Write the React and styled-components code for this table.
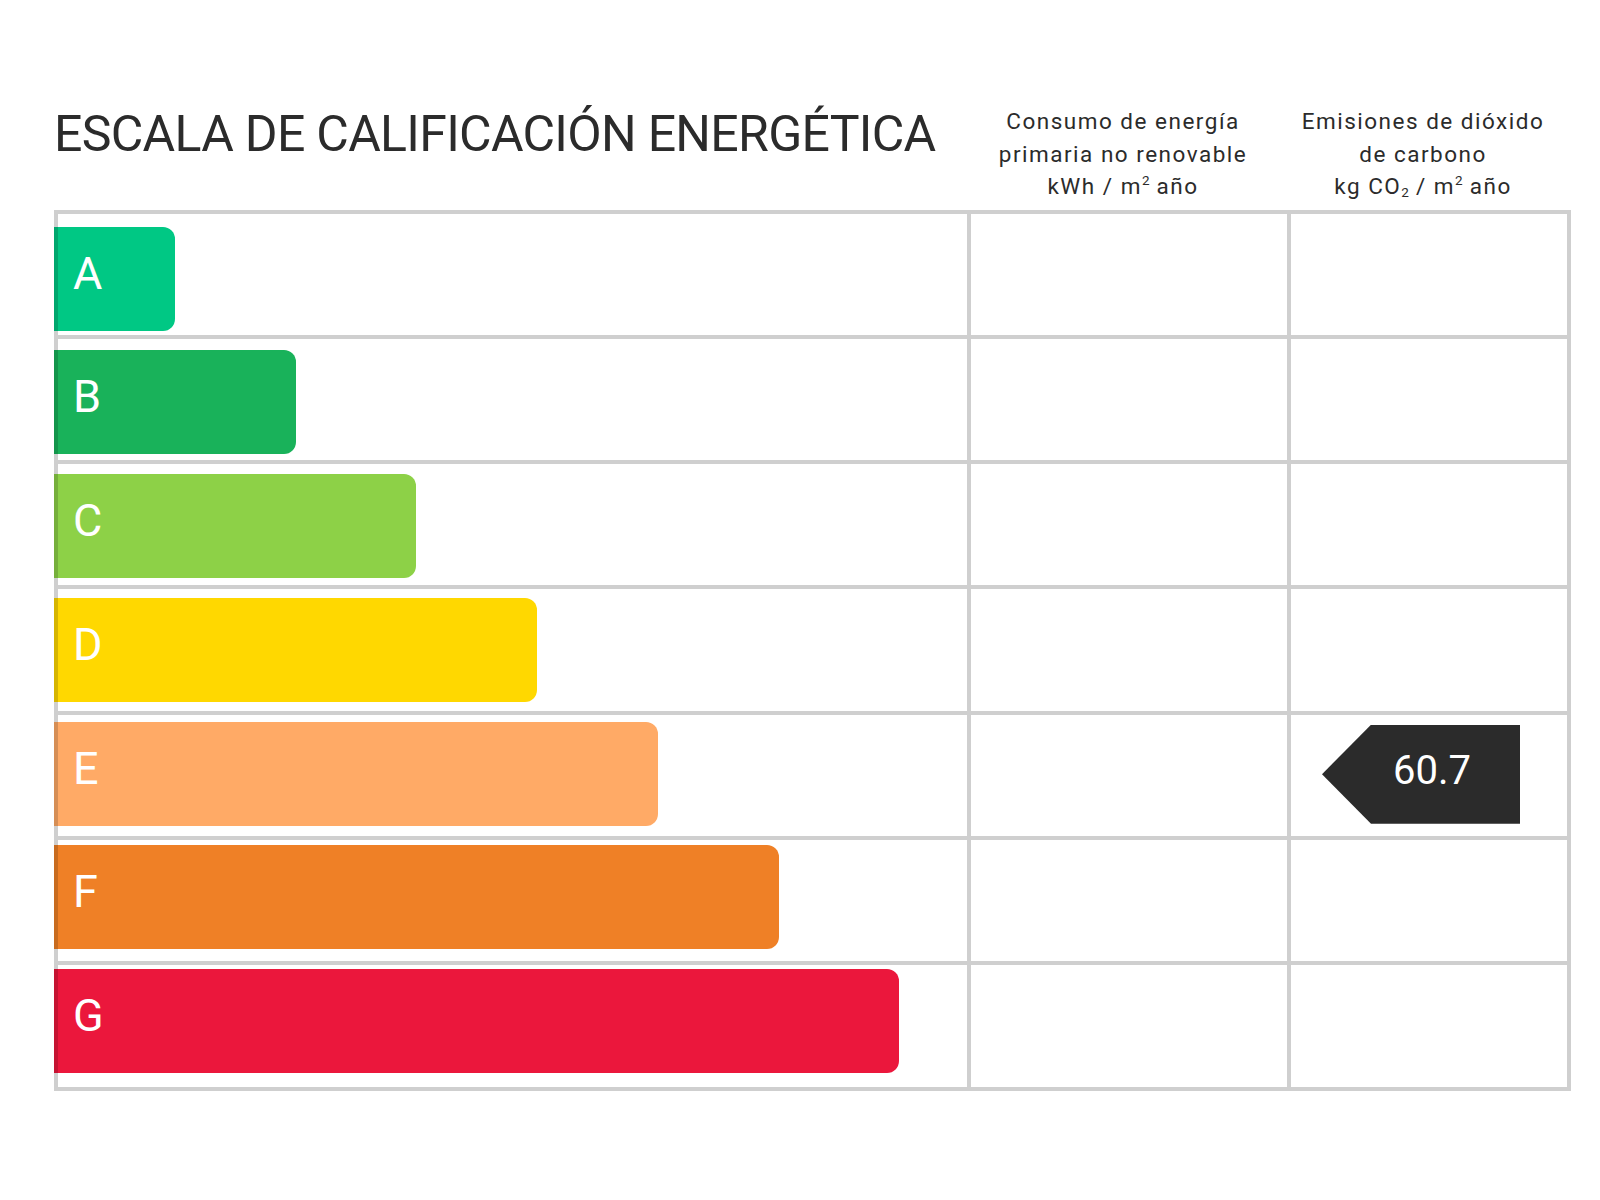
import styled, { createGlobalStyle } from "styled-components";

const GlobalStyle = createGlobalStyle`
	html, body {
		margin: 0;
		padding: 0;
		background: #fff;
	}
	body {
		font-family: Roboto, "Liberation Sans", sans-serif;
		color: #2b2b2b;
	}
`;

const ratings = [
	{ letter: "A", color: "#00c884" },
	{ letter: "B", color: "#19b25a" },
	{ letter: "C", color: "#8dd147" },
	{ letter: "D", color: "#ffd800" },
	{ letter: "E", color: "#ffaa66" },
	{ letter: "F", color: "#ef8026" },
	{ letter: "G", color: "#eb173c" },
];

const COLUMNS = "909px 316px 276px";

export default function App () {
	return (
		<>
			<GlobalStyle />
			<Page>
				<Header>
					<Title>ESCALA DE CALIFICACIÓN ENERGÉTICA</Title>
					<ColumnLabel>
						Consumo de energía<br />
						primaria no renovable<br />
						kWh / m<Sup>2</Sup> año
					</ColumnLabel>
					<ColumnLabel>
						Emisiones de dióxido<br />
						de carbono<br />
						kg CO<Sub>2</Sub> / m<Sup>2</Sup> año
					</ColumnLabel>
				</Header>
				<Table>
					{ratings.map((r, i) => (
						<Row key={r.letter}>
							<BarCell>
								<Bar color={r.color} index={i}>{r.letter}</Bar>
							</BarCell>
							<Cell />
							<Cell>
								{r.letter === "E" && <Badge>60.7</Badge>}
							</Cell>
						</Row>
					))}
				</Table>
			</Page>
		</>
	)
}

const Page = styled.div`
	padding: 105px 0 0 54px;
	min-height: 1095px;
`;

const Header = styled.div`
	display: grid;
	grid-template-columns: ${COLUMNS};
	column-gap: 4px;
	padding: 0 4px;
	align-items: end;
	margin-bottom: 7px;
`;

const Title = styled.h1`
	margin: 0 0 44px -4px;
	font-size: 50px;
	line-height: 1;
	font-weight: 400;
	letter-spacing: -0.7px;
	white-space: nowrap;
`;

const ColumnLabel = styled.div`
	font-size: 22.5px;
	line-height: 32.5px;
	letter-spacing: 1.5px;
	text-align: center;
	padding-right: 12px;
	white-space: nowrap;
`;

const Sup = styled.sup`
	font-size: 0.6em;
	line-height: 0;
	letter-spacing: 0;
	vertical-align: 0.65em;
`;

const Sub = styled.sub`
	font-size: 0.6em;
	line-height: 0;
	letter-spacing: 0;
	vertical-align: -0.25em;
`;

const Table = styled.div`
	display: grid;
	grid-template-columns: ${COLUMNS};
	grid-auto-rows: 121.3px;
	gap: 4px;
	padding: 4px;
	width: max-content;
	background: #cfcfcf;
`;

const Row = styled.div`
	display: contents;
`;

const Cell = styled.div`
	background: #fff;
	position: relative;
`;

const BarCell = styled(Cell)`
	display: flex;
	align-items: flex-start;
`;

const Bar = styled.div`
	margin: ${props => 13 - props.index * 1.5}px 0 0 -4px;
	width: ${props => 121 + props.index * 120.7}px;
	height: 104px;
	box-sizing: border-box;
	padding: 24px 0 0 19px;
	background: ${props => props.color};
	border-radius: 0 12px 12px 0;
	box-shadow: inset 4px 0 0 rgba(0, 0, 0, 0.16);
	color: #fff;
	font-size: 45px;
	line-height: 1;
	position: relative;
	z-index: 1;
`;

const Badge = styled.div`
	margin: 10px 0 0 31px;
	width: 198px;
	height: 99px;
	box-sizing: border-box;
	padding: 0 0 7px 22px;
	display: flex;
	align-items: center;
	justify-content: center;
	background: #2b2b2b;
	clip-path: polygon(49px 0, 100% 0, 100% 100%, 49px 100%, 0 50%);
	color: #fff;
	font-size: 40px;
	line-height: 1;
`;
